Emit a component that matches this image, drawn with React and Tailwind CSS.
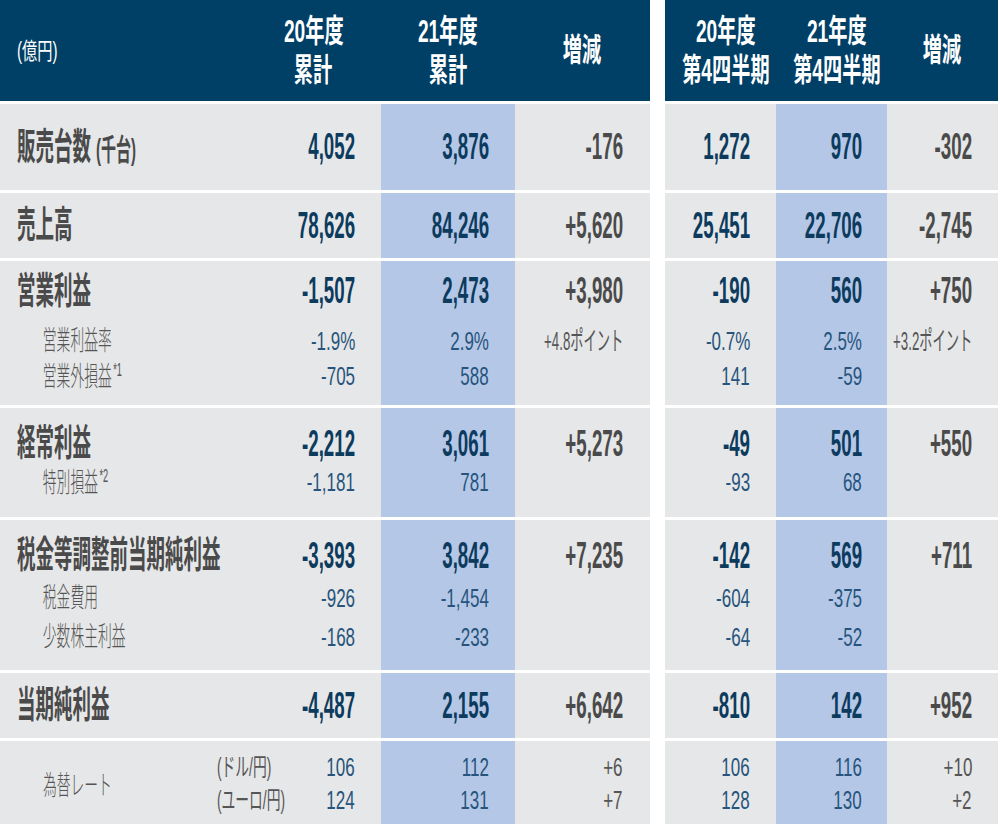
import React from "react";

// row geometry: h = row height, pt = top padding, lines = height of each text line
const ROWS = [
  {
    h: "h-[86px]", pt: "", lines: ["h-[86px]"],
    label: [{ t: "販売台数", unit: "(千台)" }],
    cols: [["4,052"], ["3,876"], ["-176"], ["1,272"], ["970"], ["-302"]],
  },
  {
    h: "h-[65px]", pt: "", lines: ["h-[65px]"],
    label: [{ t: "売上高" }],
    cols: [["78,626"], ["84,246"], ["+5,620"], ["25,451"], ["22,706"], ["-2,745"]],
  },
  {
    h: "h-[144px]", pt: "", lines: ["h-[60px]", "h-[40px]", "h-[30px]"],
    label: [{ t: "営業利益" }, { t: "営業利益率", sub: true }, { t: "営業外損益", sub: true, note: "*1" }],
    cols: [
      ["-1,507", "-1.9%", "-705"],
      ["2,473", "2.9%", "588"],
      ["+3,980", "+4.8ポイント"],
      ["-190", "-0.7%", "141"],
      ["560", "2.5%", "-59"],
      ["+750", "+3.2ポイント"],
    ],
  },
  {
    h: "h-[109px]", pt: "pt-[16px]", lines: ["h-[39px]", "h-[38px]"],
    label: [{ t: "経常利益" }, { t: "特別損益", sub: true, note: "*2" }],
    cols: [["-2,212", "-1,181"], ["3,061", "781"], ["+5,273"], ["-49", "-93"], ["501", "68"], ["+550"]],
  },
  {
    h: "h-[150px]", pt: "pt-[16px]", lines: ["h-[39px]", "h-[47px]", "h-[31px]"],
    label: [{ t: "税金等調整前当期純利益" }, { t: "税金費用", sub: true }, { t: "少数株主利益", sub: true }],
    cols: [
      ["-3,393", "-926", "-168"],
      ["3,842", "-1,454", "-233"],
      ["+7,235"],
      ["-142", "-604", "-64"],
      ["569", "-375", "-52"],
      ["+711"],
    ],
  },
  {
    h: "h-[65px]", pt: "", lines: ["h-[65px]"],
    label: [{ t: "当期純利益" }],
    cols: [["-4,487"], ["2,155"], ["+6,642"], ["-810"], ["142"], ["+952"]],
  },
  {
    h: "h-[83px]", pt: "pt-[9px]", lines: ["h-[34px]", "h-[32px]"], light: true, fx: true,
    label: [],
    cols: [["106", "124"], ["112", "131"], ["+6", "+7"], ["106", "128"], ["116", "130"], ["+10", "+2"]],
  },
];

const Num = ({ v, bold, diff }) => {
  if (v.endsWith("ポイント")) {
    return (
      <span className="inline-block origin-right scale-x-[0.51] whitespace-nowrap text-[26px] text-[#555555]">
        {v}
      </span>
    );
  }
  if (bold) {
    return (
      <span
        className={`inline-block origin-right scale-x-[0.52] whitespace-nowrap text-[36px] font-bold ${
          diff ? "text-[#4a4a4a]" : "text-[#0c3b5e]"
        }`}
      >
        {v}
      </span>
    );
  }
  return (
    <span
      className={`inline-block origin-right scale-x-[0.68] whitespace-nowrap text-[25px] ${
        diff ? "text-[#555555]" : "text-[#26547c]"
      }`}
    >
      {v}
    </span>
  );
};

const Cell = ({ row, vals, diff, hl, pr }) => (
  <div className={`${row.pt} ${pr} ${hl ? "bg-[#b4c7e7]" : ""}`}>
    {row.lines.map((lh, i) => (
      <div key={i} className={`flex items-center justify-end ${lh}`}>
        {vals[i] ? <Num v={vals[i]} bold={i === 0 && !row.light} diff={diff} /> : null}
      </div>
    ))}
  </div>
);

const Label = ({ item }) => {
  if (item.sub) {
    return (
      <span className="inline-block origin-left scale-x-[0.51] whitespace-nowrap pl-[84px] text-[27px] font-light text-[#555555]">
        {item.t}
        {item.note && <span className="ml-[3px] align-[10px] text-[18px]">{item.note}</span>}
      </span>
    );
  }
  return (
    <span className="inline-block origin-left scale-x-[0.5] whitespace-nowrap pl-[34px] text-[37px] font-bold text-[#4a4a4a]">
      {item.t}
      {item.unit && <span className="ml-[10px] text-[30px]">{item.unit}</span>}
    </span>
  );
};

const LabelCell = ({ row }) => {
  if (row.fx) {
    return (
      <div className="flex">
        <div className="flex w-[217px] shrink-0 items-center pt-[8px] pl-[43px]">
          <span className="inline-block origin-left scale-x-[0.51] whitespace-nowrap text-[27px] font-light text-[#555555]">
            為替レート
          </span>
        </div>
        <div className={`shrink-0 ${row.pt}`}>
          {["(ドル/円)", "(ユーロ/円)"].map((t, i) => (
            <div key={t} className={`flex items-center ${row.lines[i]}`}>
              <span className="inline-block origin-left scale-x-[0.55] whitespace-nowrap text-[25px] text-[#555555]">
                {t}
              </span>
            </div>
          ))}
        </div>
      </div>
    );
  }
  return (
    <div className={row.pt}>
      {row.lines.map((lh, i) => (
        <div key={i} className={`flex items-center ${lh}`}>
          {row.label[i] ? <Label item={row.label[i]} /> : null}
        </div>
      ))}
    </div>
  );
};

const Head = ({ lines, shift }) => (
  <div className={`flex flex-col items-center justify-center ${shift ? "pl-[10px]" : ""}`}>
    {lines.map((t) => (
      <span key={t} className="inline-block scale-x-[0.6] whitespace-nowrap text-[32px] leading-[39px] font-bold text-white">
        {t}
      </span>
    ))}
  </div>
);

const App = () => {
  return (
    <div className="h-[828px] w-[1000px] bg-white font-['Liberation_Sans','Noto_Sans_CJK_JP',sans-serif] leading-none">
      <div className="flex">
        {/* cumulative */}
        <div className="flex w-[650px] flex-col gap-[3px]">
          <div className="grid h-[101px] grid-cols-[246px_135px_134px_135px] bg-[#003f66]">
            <div className="flex items-center pl-[17px] pt-[2px]">
              <span className="inline-block origin-left scale-x-[0.66] text-[23px] text-white">(億円)</span>
            </div>
            <Head lines={["20年度", "累計"]} />
            <Head lines={["21年度", "累計"]} />
            <Head lines={["増減"]} />
          </div>
          {ROWS.map((row, i) => (
            <div key={i} className={`grid grid-cols-[246px_135px_134px_135px] bg-[#e6e7e8] ${row.h}`}>
              <LabelCell row={row} />
              <Cell row={row} vals={row.cols[0]} pr="pr-[26px]" />
              <Cell row={row} vals={row.cols[1]} pr="pr-[26px]" hl />
              <Cell row={row} vals={row.cols[2]} pr="pr-[27px]" diff />
            </div>
          ))}
        </div>

        {/* fourth quarter */}
        <div className="ml-[15px] flex w-[333px] flex-col gap-[3px]">
          <div className="grid h-[101px] grid-cols-[111px_111px_111px] bg-[#003f66]">
            <Head lines={["20年度", "第4四半期"]} shift />
            <Head lines={["21年度", "第4四半期"]} shift />
            <Head lines={["増減"]} />
          </div>
          {ROWS.map((row, i) => (
            <div key={i} className={`grid grid-cols-[111px_111px_111px] bg-[#e6e7e8] ${row.h}`}>
              <Cell row={row} vals={row.cols[3]} pr="pr-[26px]" />
              <Cell row={row} vals={row.cols[4]} pr="pr-[25px]" hl />
              <Cell row={row} vals={row.cols[5]} pr="pr-[26px]" diff />
            </div>
          ))}
        </div>
      </div>
    </div>
  );
};

export default App;
